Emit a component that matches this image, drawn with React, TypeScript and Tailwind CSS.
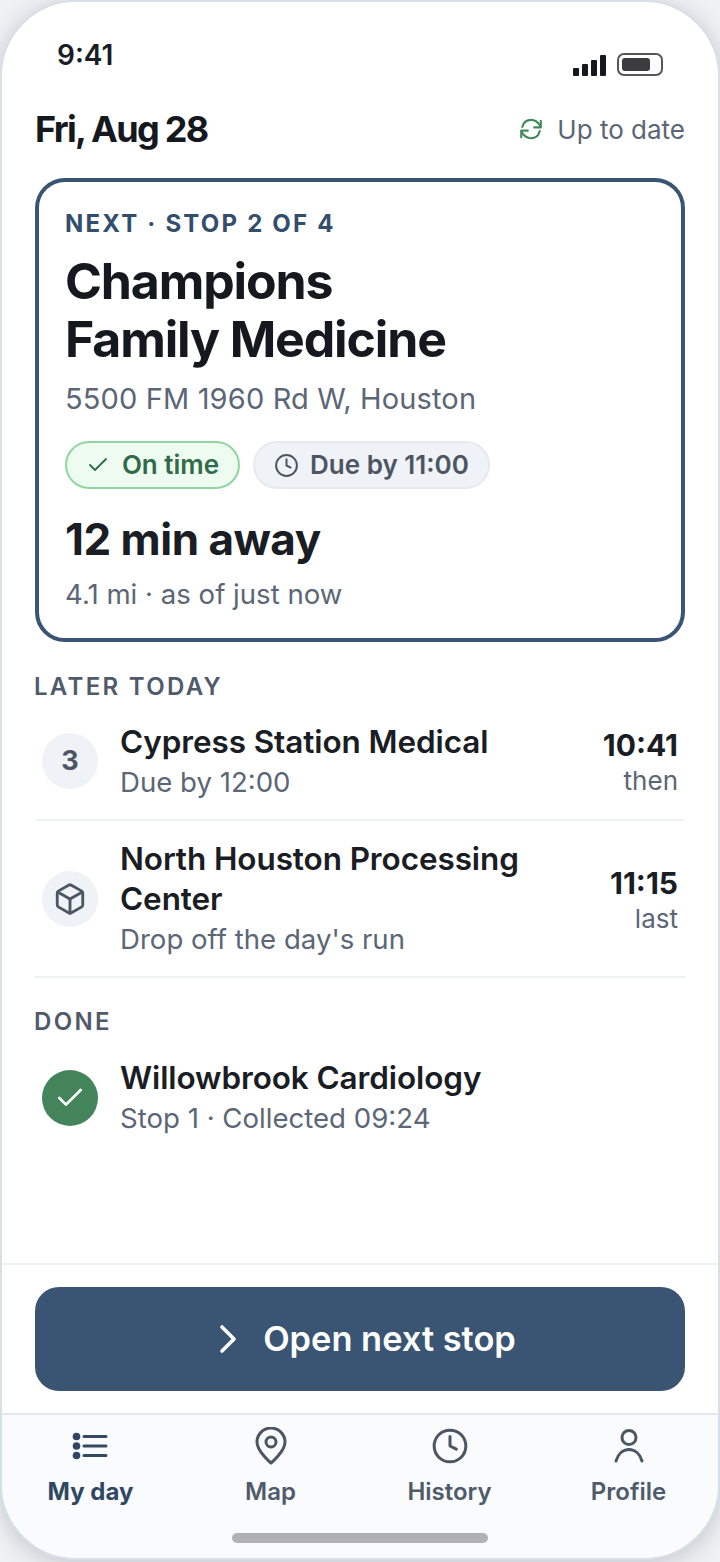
import React from "react";
import { Box, Check, ChevronRight, Clock } from "lucide-react";

const font = { fontFamily: "Inter, 'Noto Sans', sans-serif" };

const ListIcon = () => (
  <svg width="36" height="30" viewBox="0 0 36 30" fill="none" stroke="#334a63" strokeLinecap="round" className="mr-[4px]">
    <circle cx="4.5" cy="5.5" r="3.8" fill="#2f4763" stroke="none" />
    <circle cx="4.5" cy="15" r="3.8" fill="#2f4763" stroke="none" />
    <circle cx="4.5" cy="24.5" r="3.8" fill="#2f4763" stroke="none" />
    <path d="M12 5.5h22M12 15h22M12 24.5h22" strokeWidth="3" />
  </svg>
);

const PinIcon = () => (
  <svg width="32" height="38" viewBox="0 0 32 38" fill="none" stroke="#4b5563" strokeWidth="3" strokeLinejoin="round">
    <path d="M16 36C16 36 2 24.500 2 15a14 14 0 0 1 28 0C30 24.500 16 36 16 36Z" />
    <circle cx="16" cy="15" r="5" />
  </svg>
);

const UserIcon = () => (
  <svg width="32" height="36" viewBox="0 0 32 36" fill="none" stroke="#4b5563" strokeWidth="3" strokeLinecap="round">
    <circle cx="16" cy="9.500" r="7" />
    <path d="M3 33C5 26 10 21.500 16 21.500S27 26 29 33" />
  </svg>
);

const SyncIcon = () => (
  <svg width="26" height="26" viewBox="0 0 24 24" fill="none" stroke="#3f8a5a" strokeWidth="2" strokeLinecap="round" strokeLinejoin="round">
    <path d="M4 10C5 6 8 3.500 12 3.500C15 3.500 18 5 20.500 9" />
    <path d="M21 4.500V10.500H15" />
    <path d="M20 14C19 18 16 20.500 12 20.500C9 20.500 6 19 3.500 15" />
    <path d="M3 19.500V13.500H9" />
  </svg>
);

const Row = ({
  icon,
  title,
  sub,
  time,
  label,
}: {
  icon: React.ReactNode;
  title: React.ReactNode;
  sub: string;
  time?: string;
  label?: string;
}) => (
  <div className="flex items-center">
    <div className="w-[56px] h-[56px] ml-[7px] rounded-full flex items-center justify-center shrink-0 bg-[#eff2f6]">
      {icon}
    </div>
    <div className="flex-1 ml-[22px] mt-[2px]">
      <div className="text-[31.5px] leading-[40px] font-semibold text-[#1a1d24] tracking-[-0.1px]">{title}</div>
      <div className="text-[27.6px] leading-[41px] text-[#5b6676]">{sub}</div>
    </div>
    {time && (
      <div className="text-right mr-[7px] mt-[2px]">
        <div className="text-[30px] leading-[38px] font-bold text-[#1a1d24]">{time}</div>
        <div className="text-[26px] leading-[34px] text-[#5b6676]">{label}</div>
      </div>
    )}
  </div>
);

const Tab = ({ icon, label, active }: { icon: React.ReactNode; label: string; active?: boolean }) => (
  <div className="flex flex-col items-center w-[180px]">
    <div className="h-[40px] flex items-center justify-center">{icon}</div>
    <div className={`mt-[10px] text-[24px] leading-[32px] ${active ? "font-bold text-[#2f4763] mr-[2px]" : "font-semibold text-[#4f5a6a]"}`}>
      {label}
    </div>
  </div>
);

export default function App() {
  return (
    <div style={font} className="w-[720px] h-[1562px] bg-[#eff2f5] overflow-hidden">
      <div className="h-[1560px] rounded-[76px] border-2 border-[#d8dfe8] bg-white overflow-hidden flex flex-col shadow-[0_4px_24px_rgba(15,23,42,0.2)]">
        {/* status bar */}
        <div className="flex justify-between items-start pl-[55px] pr-[55px] pt-[36px] h-[97px]">
          <span className="text-[28px] leading-[34px] font-semibold text-[#1a1d24]">9:41</span>
          <div className="flex items-end gap-[11px] mt-[15px]">
            <div className="flex items-end gap-[3px]">
              <span className="w-[6px] h-[8px] rounded-[1px] bg-[#15181e]" />
              <span className="w-[6px] h-[12px] rounded-[1px] bg-[#15181e]" />
              <span className="w-[6px] h-[16px] rounded-[1px] bg-[#15181e]" />
              <span className="w-[6px] h-[21px] rounded-[1px] bg-[#15181e]" />
            </div>
            <div className="w-[46px] h-[23px] rounded-[7px] border-2 border-[#55555a] py-[3px] px-[3px]">
              <div className="w-[28px] h-full rounded-[3px] bg-[#3b3b40]" />
            </div>
          </div>
        </div>

        {/* date row */}
        <div className="flex justify-between items-center px-[33px] h-[60px]">
          <span className="text-[36px] font-bold tracking-[-1.7px] text-[#15181e]">Fri, Aug 28</span>
          <div className="flex items-center gap-[13px]">
            <SyncIcon />
            <span className="text-[26px] text-[#5b6676]">Up to date</span>
          </div>
        </div>

        {/* next stop card */}
        <div className="mx-[33px] mt-[19px] h-[464px] rounded-[30px] border-4 border-[#3a5573] px-[26px] pt-[26px]">
          <div className="text-[24px] leading-[32px] font-bold tracking-[2.2px] text-[#334e6c]">NEXT · STOP 2 OF 4</div>
          <div className="mt-[12px] text-[50px] leading-[58px] font-bold tracking-[-1.15px] text-[#15181e]">
            Champions
            <br />
            Family Medicine
          </div>
          <div className="mt-[11px] text-[29px] leading-[40px] tracking-[0.15px] text-[#5b6676]">5500 FM 1960 Rd W, Houston</div>
          <div className="flex gap-[13px] mt-[22px]">
            <div className="h-[48px] w-[175px] rounded-full border-2 border-[#8fd6a0] bg-[#eefbf1] flex items-center justify-center gap-[12px]">
              <Check size={24} strokeWidth={1.8} className="text-[#2f6b46]" />
              <span className="pb-[2px] text-[26px] font-semibold text-[#2f6b46]">On time</span>
            </div>
            <div className="h-[48px] w-[237px] rounded-full border-2 border-[#e6eaef] bg-[#eff2f6] flex items-center justify-center gap-[11px]">
              <Clock size={25} strokeWidth={1.9} className="text-[#4b5563]" />
              <span className="pb-[2px] text-[26px] font-semibold text-[#4b5563]">Due by 11:00</span>
            </div>
          </div>
          <div className="mt-[20px] text-[44px] leading-[60px] font-bold tracking-[-0.5px] text-[#1a1d24]">12 min away</div>
          <div className="mt-[6px] text-[27.6px] leading-[38px] text-[#5b6676]">4.1 mi · as of just now</div>
        </div>

        {/* later today */}
        <div className="ml-[32px] mt-[29px] text-[24px] leading-[32px] font-semibold tracking-[2.300px] text-[#4f5a6a]">LATER TODAY</div>
        <div className="mx-[33px] h-[118px] flex flex-col justify-center border-b-2 border-[#eff2f5]">
          <Row
            icon={<span className="text-[27px] font-bold text-[#4b5563]">3</span>}
            title="Cypress Station Medical"
            sub="Due by 12:00"
            time="10:41"
            label="then"
          />
        </div>
        <div className="mx-[33px] h-[157px] flex flex-col justify-center border-b-2 border-[#eff2f5]">
          <Row
            icon={<Box size={34} strokeWidth={2} className="text-[#4b5563]" />}
            title={
              <>
                North Houston Processing
                <br />
                Center
              </>
            }
            sub="Drop off the day's run"
            time="11:15"
            label="last"
          />
        </div>

        {/* done */}
        <div className="ml-[32px] mt-[28px] text-[24px] leading-[32px] font-semibold tracking-[2.300px] text-[#4f5a6a]">DONE</div>
        <div className="mx-[33px] mt-[20px] flex items-center">
          <div className="w-[56px] h-[56px] ml-[7px] rounded-full bg-[#44845b] flex items-center justify-center shrink-0">
            <Check size={32} strokeWidth={2} className="text-white" />
          </div>
          <div className="ml-[22px]">
            <div className="text-[31.5px] leading-[40px] font-semibold text-[#1a1d24] tracking-[-0.1px]">Willowbrook Cardiology</div>
            <div className="text-[27.6px] leading-[40px] text-[#5b6676]">Stop 1 · Collected 09:24</div>
          </div>
        </div>

        {/* action */}
        <div className="mt-auto border-t-2 border-[#eff2f5] px-[33px] py-[22px]">
          <div className="h-[104px] rounded-[24px] bg-[#3a5573] flex items-center justify-center gap-[11px]">
            <ChevronRight size={48} strokeWidth={1.8} className="text-white" />
            <span className="text-[34.4px] font-semibold text-white">Open next stop</span>
          </div>
        </div>

        {/* tabs */}
        <div className="h-[145px] bg-[#f9fbfd] border-t-2 border-[#e3e8ee] pt-[11px] relative">
          <div className="flex">
            <Tab active icon={<ListIcon />} label="My day" />
            <Tab icon={<PinIcon />} label="Map" />
            <Tab icon={<Clock size={38} strokeWidth={1.9} className="text-[#4b5563]" />} label="History" />
            <Tab icon={<UserIcon />} label="Profile" />
          </div>
          <div className="absolute left-[230px] bottom-[15px] w-[256px] h-[10px] rounded-full bg-[#b1b1b3]" />
        </div>
      </div>
    </div>
  );
}
